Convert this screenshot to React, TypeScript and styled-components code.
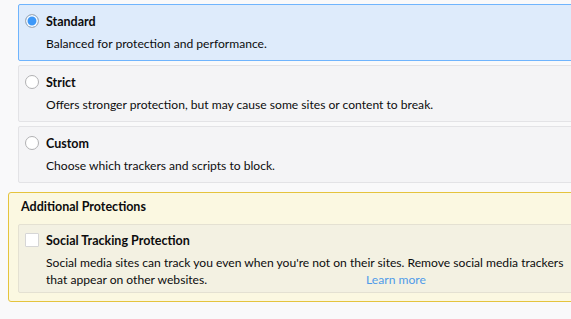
import styled, { createGlobalStyle } from "styled-components";

const GlobalStyle = createGlobalStyle`
  body {
    margin: 0;
    background: #f9f9fa;
    overflow: hidden;
    font-family: "Lato", "Noto Sans", sans-serif;
    font-size: 12px;
    color: #0c0c0d;
  }
`;

const Page = styled.div`
  width: 620px;
  padding-top: 4px;
`;

const Options = styled.div`
  display: flex;
  flex-direction: column;
  gap: 4px;
  margin-left: 18px;
`;

const Card = styled.div<{ selected?: boolean }>`
  box-sizing: border-box;
  height: 57px;
  padding: 7px 0 0 6px;
  border: 1px solid ${(p) => (p.selected ? "#6fb4fd" : "#e3e3e6")};
  border-radius: 2px;
  background: ${(p) => (p.selected ? "#deebfb" : "#f4f4f6")};
`;

const TitleRow = styled.div`
  display: flex;
  align-items: center;
  gap: 7px;
  height: 18px;
  font-weight: 700;
  font-size: 12.5px;
`;

const Radio = styled.span<{ checked?: boolean }>`
  flex-shrink: 0;
  box-sizing: border-box;
  width: 14px;
  height: 14px;
  border-radius: 50%;
  border: 1px solid #b1b1b3;
  background: ${(p) => (p.checked ? "#3d98f8" : "#fff")};
  box-shadow: ${(p) => (p.checked ? "inset 0 0 0 1.5px #fff" : "none")};
`;

const Desc = styled.div`
  margin: 5px 0 0 21px;
  line-height: 17px;
  font-size: 12.1px;
`;

const Additional = styled.section`
  box-sizing: border-box;
  margin: 9px 0 0 8px;
  height: 110px;
  padding: 5px 0 0 9px;
  border: 1px solid #e5c43d;
  border-radius: 3px;
  background: #fbf8e1;
`;

const Heading = styled.div`
  height: 18px;
  line-height: 18px;
  margin: 0 0 8px 3px;
  font-weight: 700;
  font-size: 12.5px;
`;

const InnerBox = styled.div`
  box-sizing: border-box;
  height: 69px;
  padding: 6px 0 0 6px;
  border: 1px solid #e4e1d2;
  border-radius: 2px;
  background: #f3f1e2;
`;

const Checkbox = styled.span`
  flex-shrink: 0;
  box-sizing: border-box;
  width: 14px;
  height: 14px;
  border: 1px solid #d6d6d6;
  border-radius: 1px;
  background: #fff;
`;

const LearnMore = styled.a`
  margin-left: 159px;
  color: #4f9be9;
  text-decoration: none;
`;

const options = [
  {
    title: "Standard",
    desc: "Balanced for protection and performance.",
    selected: true,
  },
  {
    title: "Strict",
    desc: "Offers stronger protection, but may cause some sites or content to break.",
  },
  {
    title: "Custom",
    desc: "Choose which trackers and scripts to block.",
  },
];

export default function App() {
  return (
    <Page>
      <GlobalStyle />
      <Options>
        {options.map((o) => (
          <Card key={o.title} selected={o.selected}>
            <TitleRow>
              <Radio checked={o.selected} />
              {o.title}
            </TitleRow>
            <Desc>{o.desc}</Desc>
          </Card>
        ))}
      </Options>
      <Additional>
        <Heading>Additional Protections</Heading>
        <InnerBox>
          <TitleRow>
            <Checkbox />
            Social Tracking Protection
          </TitleRow>
          <Desc>
            Social media sites can track you even when you're not on their
            sites. Remove social media trackers
            <br />
            that appear on other websites.
            <LearnMore href="#">Learn more</LearnMore>
          </Desc>
        </InnerBox>
      </Additional>
    </Page>
  );
}
